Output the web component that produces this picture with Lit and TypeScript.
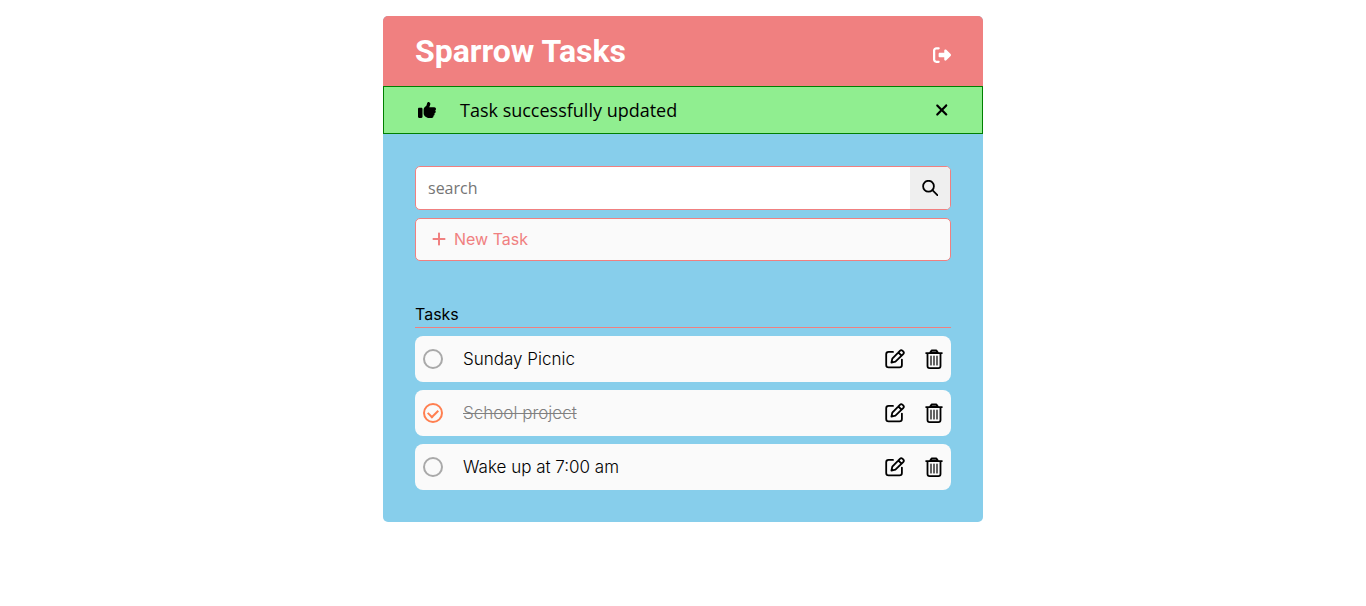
import { LitElement, html, css, svg } from "lit";
import { customElement, state } from "lit/decorators.js";
import { classMap } from "lit/directives/class-map.js";

interface Task {
  id: number;
  title: string;
  done: boolean;
}

const ICONS = {
  logout: {
    box: "0 0 512 512",
    d: "M377.9 105.9L500.7 228.7c7.2 7.2 11.3 17.1 11.3 27.3s-4.1 20.1-11.3 27.3L377.9 406.1c-6.4 6.4-15 9.9-24 9.9c-18.7 0-33.9-15.2-33.9-33.9l0-62.1-128 0c-17.7 0-32-14.3-32-32l0-64c0-17.7 14.3-32 32-32l128 0 0-62.1c0-18.7 15.2-33.9 33.9-33.9c9 0 17.6 3.6 24 9.9zM160 96L96 96c-17.7 0-32 14.3-32 32l0 256c0 17.7 14.3 32 32 32l64 0c17.7 0 32 14.3 32 32s-14.3 32-32 32l-64 0c-53 0-96-43-96-96L0 128C0 75 43 32 96 32l64 0c17.7 0 32 14.3 32 32s-14.3 32-32 32z",
  },
  thumb: {
    box: "0 0 512 512",
    d: "M313.4 32.9c26 5.2 42.9 30.5 37.7 56.5l-2.3 11.4c-5.3 26.7-15.1 52.1-28.8 75.2l144 0c26.5 0 48 21.5 48 48c0 18.5-10.5 34.6-25.9 42.6C497 275.4 504 288.9 504 304c0 23.4-16.8 42.9-38.9 47.1c4.4 7.3 6.9 15.8 6.9 24.9c0 21.3-13.9 39.4-33.1 45.6c.7 3.3 1.1 6.8 1.1 10.4c0 26.5-21.5 48-48 48l-97.5 0c-19 0-37.5-5.6-53.3-16.1l-38.5-25.7C176 420.4 160 390.4 160 358.3l0-38.3 0-48 0-24.9c0-29.2 13.3-56.7 36-75l7.4-5.9c26.5-21.2 44.6-51 51.2-84.2l2.3-11.4c5.2-26 30.5-42.9 56.5-37.7zM32 192l64 0c17.7 0 32 14.3 32 32l0 224c0 17.7-14.3 32-32 32l-64 0c-17.7 0-32-14.3-32-32L0 224c0-17.7 14.3-32 32-32z",
  },
  close: {
    box: "0 0 384 512",
    d: "M342.6 150.6c12.5-12.5 12.5-32.8 0-45.3s-32.8-12.5-45.3 0L192 210.7 86.6 105.4c-12.5-12.5-32.8-12.5-45.3 0s-12.5 32.8 0 45.3L146.7 256 41.4 361.4c-12.5 12.5-12.5 32.8 0 45.3s32.8 12.5 45.3 0L192 301.3 297.4 406.6c12.5 12.5 32.8 12.5 45.3 0s12.5-32.8 0-45.3L237.3 256 342.6 150.6z",
  },
  plus: {
    box: "0 0 448 512",
    d: "M256 80c0-17.7-14.3-32-32-32s-32 14.3-32 32l0 144L48 224c-17.7 0-32 14.3-32 32s14.3 32 32 32l144 0 0 144c0 17.7 14.3 32 32 32s32-14.3 32-32l0-144 144 0c17.7 0 32-14.3 32-32s-14.3-32-32-32l-144 0 0-144z",
  },
};

const icon = (name: keyof typeof ICONS, size = "") => html`<svg
  class="icon ${size}"
  viewBox=${ICONS[name].box}
  aria-hidden="true"
>${svg`<path d=${ICONS[name].d}></path>`}</svg>`;

const searchIcon = html`<svg class="icon line" viewBox="0 0 16 16" aria-hidden="true">
  <circle cx="6.5" cy="6.2" r="5.4"></circle>
  <path d="M10.4 10.2L15.4 15.2"></path>
</svg>`;

const editIcon = html`<svg class="icon large line" viewBox="0 0 20 20" aria-hidden="true">
  <path d="M8 2.9H3.6Q1.2 2.9 1.2 5.3V16Q1.2 18.4 3.6 18.4H14.5Q16.9 18.4 16.9 16V10.6"></path>
  <path d="M6.4 13.6L7.3 9.7L14.9 1.8Q16.2 0.5 17.6 1.8L18.2 2.4Q19.5 3.8 18.2 5.1L10.4 12.7ZM13.4 3.5L16.5 6.6"></path>
</svg>`;

const trashIcon = html`<svg class="icon large line" viewBox="0 0 18 20" aria-hidden="true">
  <path d="M5.2 3.6L6.6 1.4H11.4L12.8 3.6Z" fill="#a9a9a9"></path>
  <path d="M1.1 4.1H16.9M2.5 4.1V17Q2.5 19.1 4.6 19.1H13.4Q15.5 19.1 15.5 17V4.1"></path>
  <path class="thin" d="M6 7.2V16M9 7.2V16M12 7.2V16"></path>
</svg>`;

@customElement("app-root")
export class AppRoot extends LitElement {
  static styles = css`
    :host {
      display: block;
      padding: 16px;
      color: #000;
      font: 400 16px/24px Inter, sans-serif;
    }
    * {
      box-sizing: border-box;
    }
    button {
      display: flex;
      align-items: center;
      justify-content: center;
      margin: 0;
      padding: 0;
      border: 0;
      background: none;
      color: inherit;
      font: inherit;
      cursor: pointer;
    }
    .icon {
      display: block;
      height: 16px;
      fill: currentColor;
    }
    .medium {
      height: 18px;
    }
    .large {
      height: 20px;
    }
    .line {
      fill: none;
      stroke: currentColor;
      stroke-width: 1.8;
      stroke-linecap: round;
      stroke-linejoin: round;
    }
    .thin {
      stroke-width: 1.2;
    }
    .card {
      max-width: 600px;
      margin: 0 auto;
      border-radius: 5px;
      overflow: hidden;
      background: skyblue;
    }
    .header {
      display: flex;
      align-items: flex-end;
      justify-content: space-between;
      padding: 16px 32px;
      background: lightcoral;
      color: #fff;
    }
    .title {
      margin: 0;
      font: 700 32px/38px Roboto, sans-serif;
    }
    .logout {
      padding: 6px 0;
    }
    .notice {
      display: flex;
      align-items: center;
      padding: 11px 34px;
      gap: 24px;
      border: 1px solid green;
      background: lightgreen;
      font: 400 18px/24px "Open Sans", sans-serif;
    }
    .message {
      flex: 1;
    }
    .body {
      padding: 32px;
    }
    .search {
      display: flex;
      margin-bottom: 8px;
      border: 1px solid lightcoral;
      border-radius: 5px;
      overflow: hidden;
      background: #fff;
    }
    .query {
      flex: 1;
      min-width: 0;
      padding: 9px 12px;
      border: 0;
      outline: 0;
      background: none;
      font: 400 16px/24px "Open Sans", sans-serif;
    }
    .query::placeholder {
      color: #757575;
    }
    .go {
      width: 40px;
      background: #efefef;
    }
    .new {
      justify-content: flex-start;
      gap: 8px;
      width: 100%;
      padding: 8px 16px 9px;
      border: 1px solid lightcoral;
      border-radius: 5px;
      background: #fafafa;
      color: lightcoral;
    }
    .heading {
      margin: 41px 0 8px;
      padding-bottom: 1px;
      border-bottom: 1px solid lightcoral;
      font: inherit;
    }
    .list {
      display: grid;
      gap: 8px;
      margin: 0;
      padding: 0;
      list-style: none;
    }
    .task {
      display: flex;
      align-items: center;
      gap: 20px;
      padding: 11px 8px;
      border-radius: 8px;
      background: #fafafa;
    }
    .tick {
      display: grid;
      place-items: center;
      width: 20px;
      height: 20px;
      margin: 0;
      border: 2px solid darkgray;
      border-radius: 50%;
      appearance: none;
    }
    .tick:checked {
      border-color: coral;
    }
    .tick:checked::after {
      content: "";
      width: 8px;
      height: 5px;
      margin-bottom: 2px;
      border: solid coral;
      border-width: 0 0 2px 2px;
      transform: rotate(-45deg);
    }
    .name {
      flex: 1;
      font-size: 17px;
      font-weight: 300;
    }
    .done {
      color: gray;
      text-decoration: line-through;
    }
  `;

  @state() private notice = "Task successfully updated";
  @state() private tasks: Task[] = [
    { id: 1, title: "Sunday Picnic", done: false },
    { id: 2, title: "School project", done: true },
    { id: 3, title: "Wake up at 7:00 am", done: false },
  ];

  private toggle(id: number) {
    this.tasks = this.tasks.map((t) => (t.id === id ? { ...t, done: !t.done } : t));
  }

  private remove(id: number) {
    this.tasks = this.tasks.filter((t) => t.id !== id);
  }

  private renderTask(task: Task) {
    const id = `task-${task.id}`;
    return html`<li class="task">
      <input class="tick" type="checkbox" id=${id} .checked=${task.done} @change=${() => this.toggle(task.id)} />
      <label class=${classMap({ name: true, done: task.done })} for=${id}><span>${task.title}</span></label>
      <button type="button" aria-label="Edit">${editIcon}</button>
      <button type="button" aria-label="Delete" @click=${() => this.remove(task.id)}>${trashIcon}</button>
    </li>`;
  }

  render() {
    return html`<main class="card">
      <header class="header">
        <h1 class="title">Sparrow Tasks</h1>
        <button class="logout" type="button" aria-label="Log out">${icon("logout", "medium")}</button>
      </header>
      ${this.notice
        ? html`<div class="notice" role="status">
            ${icon("thumb", "medium")}
            <span class="message">${this.notice}</span>
            <button type="button" aria-label="Dismiss" @click=${() => (this.notice = "")}>${icon("close", "medium")}</button>
          </div>`
        : null}
      <div class="body">
        <form class="search" role="search" @submit=${(e: Event) => e.preventDefault()}>
          <input class="query" type="text" placeholder="search" aria-label="search" />
          <button class="go" aria-label="Search">${searchIcon}</button>
        </form>
        <button class="new" type="button">${icon("plus")}<span>New Task</span></button>
        <h2 class="heading">Tasks</h2>
        <ul class="list">
          ${this.tasks.map((t) => this.renderTask(t))}
        </ul>
      </div>
    </main>`;
  }
}
